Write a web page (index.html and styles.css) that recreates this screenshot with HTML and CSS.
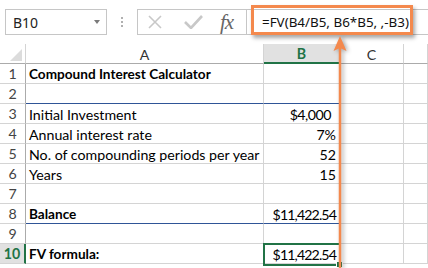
FILE: index.html
```html
<!DOCTYPE html>
<html lang="en">
<head>
    <meta charset="UTF-8">
    <title>FV formula</title>
    <link rel="stylesheet" href="styles.css">
</head>
<body>
    <div class="window">
        <div class="formula-bar">
            <div class="name-box">
                <span>B10</span>
                <span class="caret"></span>
            </div>
            <div class="grip"><i></i><i></i><i></i></div>
            <div class="fn-buttons">
                <svg class="icon-cancel" width="14" height="14" viewBox="0 0 14 14">
                    <path d="M1 1 L13 13 M13 1 L1 13" stroke="#c8c8c8" stroke-width="1.6" fill="none"/>
                </svg>
                <svg class="icon-enter" width="19" height="14" viewBox="0 0 19 14">
                    <path d="M1 7 L7 13 L18 1" stroke="#c8c8c8" stroke-width="2.6" fill="none"/>
                </svg>
                <span class="fx">fx</span>
            </div>
            <div class="formula-input">=FV(B4/B5, B6*B5, ,-B3)</div>
        </div>

        <div class="grid">
            <div class="corner"><span class="corner-mark"></span></div>
            <div class="col-head">A</div>
            <div class="col-head selected">B</div>
            <div class="col-head">C</div>
            <div class="col-head"></div>

            <div class="row-head">1</div>
            <div class="cell bold">Compound Interest Calculator</div>
            <div class="cell num"></div>
            <div class="cell"></div>
            <div class="cell"></div>

            <div class="row-head">2</div>
            <div class="cell rule"></div>
            <div class="cell num rule"></div>
            <div class="cell"></div>
            <div class="cell"></div>

            <div class="row-head">3</div>
            <div class="cell">Initial Investment</div>
            <div class="cell num currency">$4,000</div>
            <div class="cell"></div>
            <div class="cell"></div>

            <div class="row-head">4</div>
            <div class="cell">Annual interest rate</div>
            <div class="cell num">7%</div>
            <div class="cell"></div>
            <div class="cell"></div>

            <div class="row-head">5</div>
            <div class="cell">No. of compounding periods per year</div>
            <div class="cell num">52</div>
            <div class="cell"></div>
            <div class="cell"></div>

            <div class="row-head">6</div>
            <div class="cell">Years</div>
            <div class="cell num">15</div>
            <div class="cell"></div>
            <div class="cell"></div>

            <div class="row-head">7</div>
            <div class="cell"></div>
            <div class="cell num"></div>
            <div class="cell"></div>
            <div class="cell"></div>

            <div class="row-head">8</div>
            <div class="cell bold rule">Balance</div>
            <div class="cell num plain rule">$11,422.54</div>
            <div class="cell"></div>
            <div class="cell"></div>

            <div class="row-head">9</div>
            <div class="cell"></div>
            <div class="cell num"></div>
            <div class="cell"></div>
            <div class="cell"></div>

            <div class="row-head selected">10</div>
            <div class="cell bold">FV formula:</div>
            <div class="cell num plain active">$11,422.54</div>
            <div class="cell"></div>
            <div class="cell"></div>
        </div>

        <div class="callout"></div>
        <svg class="pointer" width="24" height="240" viewBox="0 0 24 240">
            <path d="M12 2 L18.5 17 L12 14 L5.5 17 Z" fill="#f4894d"/>
            <line x1="12" y1="12" x2="12" y2="234" stroke="#f4894d" stroke-width="2.5"/>
        </svg>
    </div>
</body>
</html>
```

FILE: styles.css
```css
body {
    margin: 0;
    background: #fff;
    font-family: Lato, "Liberation Sans", sans-serif;
    color: #000;
}

.window {
    position: relative;
    width: 428px;
    height: 268px;
    overflow: hidden;
}

/* formula bar */

.formula-bar {
    display: flex;
    align-items: center;
    height: 44px;
    padding-left: 5px;
    font-family: "Noto Sans", "Open Sans", sans-serif;
}

.name-box {
    display: flex;
    align-items: center;
    box-sizing: border-box;
    width: 102px;
    height: 26px;
    padding-left: 7px;
    border: 1px solid #c6c6c6;
    font-size: 14px;
    color: #222;
}

.caret {
    margin-left: auto;
    margin-right: 6px;
    border-left: 3.5px solid transparent;
    border-right: 3.5px solid transparent;
    border-top: 4px solid #7a7a7a;
}

.grip {
    display: flex;
    flex-direction: column;
    gap: 2px;
    margin: 0 14px;
}

.grip i {
    display: block;
    width: 2px;
    height: 2px;
    background: #b0b0b0;
}

.fn-buttons {
    display: flex;
    align-items: center;
    box-sizing: border-box;
    width: 110px;
    height: 26px;
    padding-left: 10px;
    border: 1px solid #c6c6c6;
}

.icon-enter {
    margin-left: 22px;
}

.fx {
    margin-left: 17px;
    font-family: "Liberation Serif", serif;
    font-style: italic;
    font-size: 21px;
    line-height: 1;
    color: #666;
    letter-spacing: -1px;
}

.formula-input {
    flex: 1;
    display: flex;
    align-items: center;
    box-sizing: border-box;
    height: 26px;
    margin-left: -1px;
    padding-left: 15px;
    border: 1px solid #c6c6c6;
    border-right: none;
    font-size: 13.4px;
    color: #111;
    position: relative;
    z-index: 2;
}

/* worksheet grid */

.grid {
    display: grid;
    grid-template-columns: 26px 238px 76px 64px 1fr;
    grid-template-rows: 20px;
    grid-auto-rows: 20px;
}

.grid > div {
    box-sizing: border-box;
    border-right: 1px solid #d4d4d4;
    border-bottom: 1px solid #d4d4d4;
    font-size: 14.2px;
    white-space: nowrap;
}

.grid > .corner {
    display: flex;
    align-items: flex-end;
    justify-content: flex-end;
    padding: 0 3px 2px 0;
    border-bottom-color: #ababab;
}

.corner-mark {
    border-left: 12px solid transparent;
    border-bottom: 12px solid #dcdcdc;
}

.grid > .col-head {
    display: flex;
    align-items: center;
    justify-content: center;
    color: #333;
    border-bottom-color: #ababab;
    padding-top: 1px;
}

.grid > .col-head.selected {
    background: #e1e1e1;
    color: #217346;
    font-weight: bold;
    border-bottom: 2px solid #217346;
}

.grid > .row-head {
    display: flex;
    align-items: center;
    justify-content: center;
    color: #444;
    border-right-color: #ababab;
}

.grid > .row-head.selected {
    background: #e1e1e1;
    color: #217346;
    font-weight: bold;
    border-right: 2px solid #217346;
}

.grid > .cell {
    display: flex;
    align-items: center;
    padding: 1px 3px 0;
}

.grid > .bold {
    font-weight: bold;
    font-size: 13.6px;
}

.grid > .num {
    justify-content: flex-end;
}

.grid > .plain {
    letter-spacing: -0.9px;
}

.grid > .currency {
    padding-right: 8px;
    letter-spacing: -0.5px;
}

.grid > .rule {
    border-bottom-color: #2f5597;
}

.grid > .active {
    position: relative;
}

.active::after {
    content: "";
    position: absolute;
    top: -1px;
    left: -1px;
    right: -2px;
    bottom: -3px;
    border: 2px solid #217346;
}

.active::before {
    content: "";
    position: absolute;
    right: -4px;
    bottom: -5px;
    width: 5px;
    height: 5px;
    background: #217346;
    border: 1px solid #fff;
    z-index: 1;
}

/* callout overlays */

.callout {
    position: absolute;
    left: 251px;
    top: 5px;
    width: 162px;
    height: 30px;
    box-sizing: border-box;
    border: 3px solid #f4894d;
    box-shadow: 2px 3px 4px rgba(0, 0, 0, 0.35);
    z-index: 3;
}

.pointer {
    position: absolute;
    left: 328px;
    top: 34px;
    z-index: 4;
    filter: drop-shadow(2px 1px 2px rgba(0, 0, 0, 0.35));
}
```
